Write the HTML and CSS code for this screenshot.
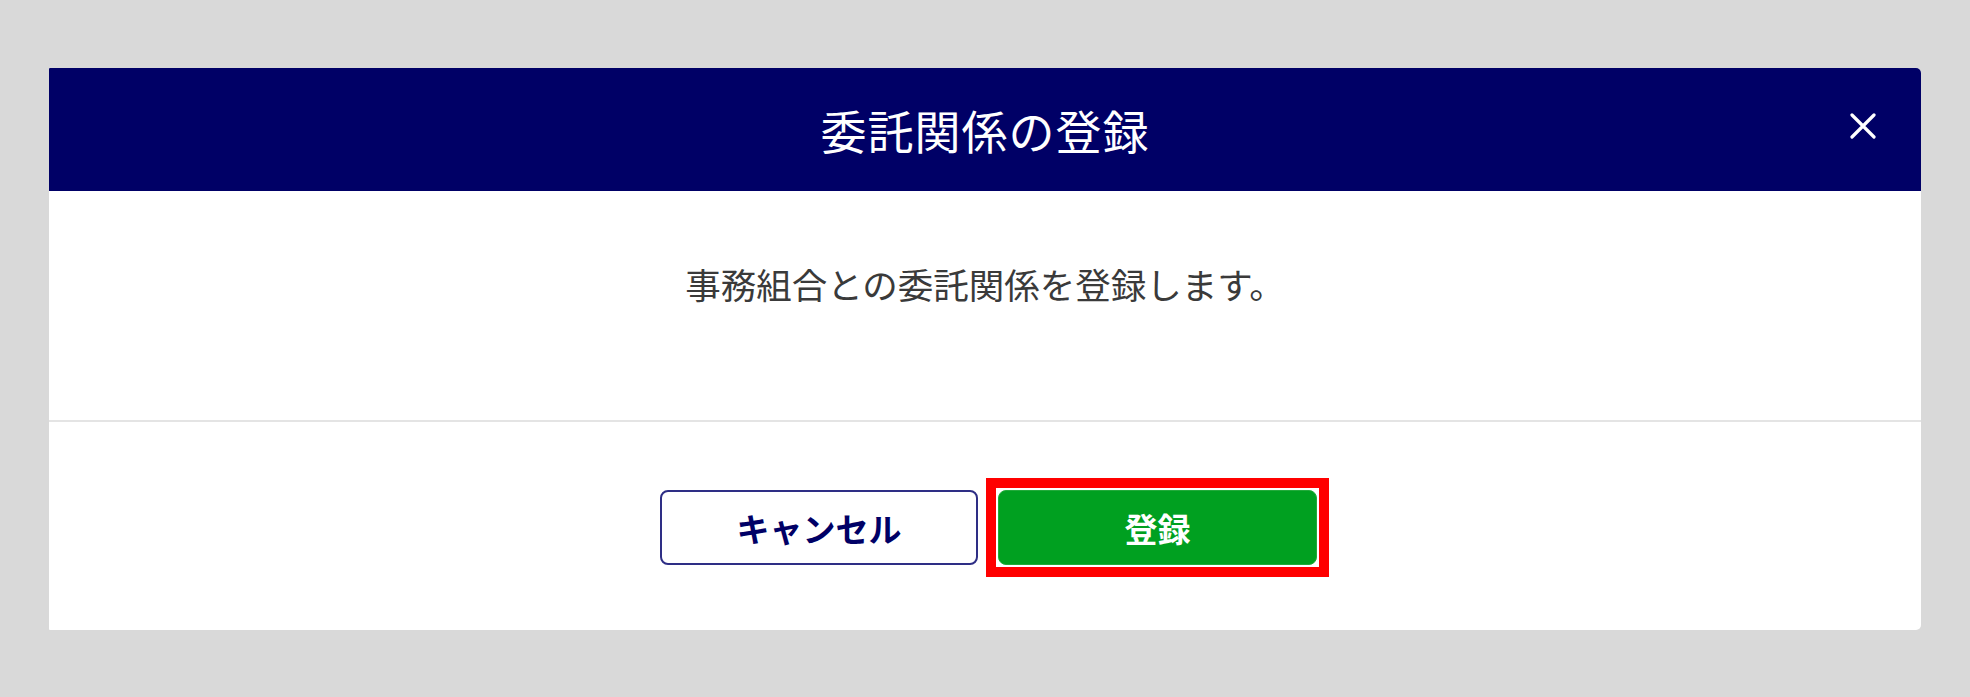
FILE: index.html
```html
<!DOCTYPE html>
<html lang="ja">
<head>
  <meta charset="UTF-8" />
  <meta name="viewport" content="width=device-width, initial-scale=1" />
  <title>委託関係の登録</title>
  <link rel="stylesheet" href="styles.css">
</head>
<body>
  <div class="modal">
    <div class="modal-header">
      <h2>委託関係の登録</h2>
      <button class="close" type="button" aria-label="閉じる">
        <svg width="26" height="26" viewBox="0 0 26 26">
          <path d="M2 2 L24 24 M24 2 L2 24" stroke="#fff" stroke-width="3.2" stroke-linecap="round" fill="none" />
        </svg>
      </button>
    </div>
    <div class="modal-body">
      <p>事務組合との委託関係を登録します。</p>
    </div>
    <div class="modal-footer">
      <button class="btn btn-cancel" type="button">キャンセル</button>
      <span class="highlight">
        <button class="btn btn-submit" type="button">登録</button>
      </span>
    </div>
  </div>
</body>
</html>
```

FILE: styles.css
```css
body {
  margin: 0;
  padding: 68px 49px;
  background: #d9d9d9;
  font-family: "Noto Sans CJK JP", "Noto Sans", sans-serif;
}
.modal {
  background: #fff;
  border-radius: 1px 5px 5px 1px;
  overflow: hidden;
}
.modal-header {
  position: relative;
  height: 123px;
  background: #000066;
  display: flex;
  align-items: center;
  justify-content: center;
}
.modal-header h2 {
  margin: 0;
  color: #fff;
  font-size: 46px;
  font-weight: 400;
  letter-spacing: 1px;
  line-height: 1.5;
}
.close {
  position: absolute;
  top: 45px;
  right: 45px;
  width: 26px;
  height: 26px;
  padding: 0;
  border: none;
  background: none;
  cursor: pointer;
}
.close svg {
  display: block;
}
.modal-body {
  height: 231px;
  box-sizing: border-box;
  padding-top: 67px;
  border-bottom: 2px solid #e4e4e4;
  text-align: center;
}
.modal-body p {
  margin: 0;
  color: #3a3a3a;
  font-size: 35.5px;
  line-height: 52px;
}
.modal-footer {
  height: 208px;
  display: flex;
  align-items: center;
  justify-content: center;
  gap: 20px;
  padding-left: 7px;
  padding-top: 3px;
  box-sizing: border-box;
}
.btn {
  display: block;
  height: 75px;
  border-radius: 8px;
  font-family: "Noto Sans CJK JP", "Noto Sans", sans-serif;
  font-size: 33px;
  font-weight: 700;
  cursor: pointer;
}
.btn-cancel {
  width: 318px;
  background: #fff;
  border: 2px solid #2e2e85;
  color: #000066;
}
.btn-submit {
  width: 319px;
  background: #00a020;
  border: 1px solid #22aa3a;
  color: #fff;
}
.highlight {
  display: block;
  margin: -12px;
  padding: 2px;
  border: 10px solid #ff0000;
  background: #fff;
}
```
